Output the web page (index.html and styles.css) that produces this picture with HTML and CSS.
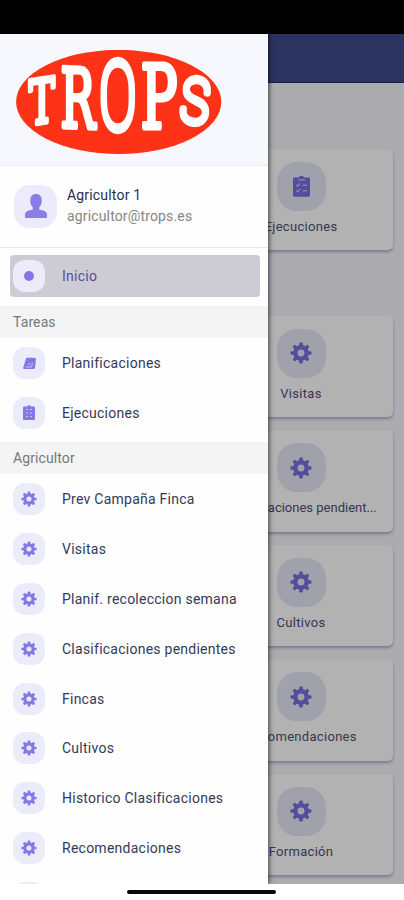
FILE: index.html
```
<!DOCTYPE html>
<html lang="es">
<head>
<meta charset="utf-8">
<title>TROPS</title>
<link rel="stylesheet" href="styles.css">
</head>
<body>
<svg class="defs" aria-hidden="true">
  <symbol id="gear" viewBox="0 0 24 24">
    <g fill="currentColor">
      <g id="teeth"><rect x="10" y="0.6" width="4" height="22.8" rx="1.3"/><rect x="0.6" y="10" width="22.8" height="4" rx="1.3"/></g>
      <use href="#teeth" transform="rotate(45 12 12)"/>
    </g>
    <circle cx="12" cy="12" r="6.1" fill="none" stroke="currentColor" stroke-width="5"/>
    <circle cx="12" cy="12" r="3.8" class="hole"/>
  </symbol>
  <symbol id="clip" viewBox="0 0 24 30">
    <path fill="currentColor" d="M1.5 3H7.5L9 1.8Q12-1 15 1.8L16.500 3H22.500Q24 3 24 4.500V28.500Q24 30 22.500 30H1.500Q0 30 0 28.500V4.500Q0 3 1.500 3Z"/>
    <path class="mark" d="M7 6.200H17M4.500 13.500L6.500 15.300L10 11.500M13.500 14H19.500M4.500 21.500L6.500 23.300L10 19.500M13.500 22H19.500"/>
  </symbol>
  <symbol id="list" viewBox="0 0 24 30">
    <path fill="currentColor" d="M1.500 3H7.500L12 0L16.500 3H22.500L24 4.500V28.500L22.500 30H1.500L0 28.500V4.500Z"/>
    <path class="mark" d="M6 9H10M14 9H18M6 16H10M14 16H18M6 23H10M14 23H18"/>
  </symbol>
  <symbol id="plan" viewBox="0 0 26 24">
    <path fill="currentColor" d="M6 3L8 1L10 2.500L12 0.500L14 2.500L16 0.500L18 2.500L21 1L26 3L24 22Q23.500 24 21 24H2Q0 24 0.500 21Z"/>
    <path class="mark" d="M5 20H17L19 12M10 15L15 13"/>
  </symbol>
  <symbol id="user" viewBox="0 0 22 24">
    <path fill="currentColor" d="M11 0C7.200 0 5.200 2.500 5.200 6.500C5.200 9.500 6.300 12 7.800 13.300V15.500L2.500 17Q0 18 0 21V23Q0 24 1.200 24H20.800Q22 24 22 23V21Q22 18 19.500 17L14.200 15.500V13.300C15.700 12 16.800 9.500 16.800 6.500C16.800 2.500 14.800 0 11 0Z"/>
  </symbol>
</svg>

<div class="phone">
  <div class="status"></div>
  <div class="screen">
    <main class="home">
      <header class="appbar"></header>
      <section class="grid first">
        <div class="card"></div>
        <div class="card"><span class="tile"><svg class="ic clip"><use href="#clip"/></svg></span><p>Ejecuciones</p></div>
      </section>
      <section class="grid">
        <div class="card"></div>
        <div class="card"><span class="tile"><svg class="ic"><use href="#gear"/></svg></span><p>Visitas</p></div>
        <div class="card"></div>
        <div class="card"><span class="tile"><svg class="ic"><use href="#gear"/></svg></span><p class="long">Clasificaciones pendient...</p></div>
        <div class="card"></div>
        <div class="card"><span class="tile"><svg class="ic"><use href="#gear"/></svg></span><p>Cultivos</p></div>
        <div class="card"></div>
        <div class="card"><span class="tile"><svg class="ic"><use href="#gear"/></svg></span><p>Recomendaciones</p></div>
        <div class="card"></div>
        <div class="card"><span class="tile"><svg class="ic"><use href="#gear"/></svg></span><p>Formación</p></div>
      </section>
    </main>
    <div class="scrim"></div>
    <aside class="drawer">
      <div class="brand">
        <svg class="logo" viewBox="16 50 206 104" role="img" aria-label="TROPS">
          <ellipse cx="118.700" cy="101.900" rx="102.600" ry="52"/>
          <g class="slab">
            <text transform="translate(29 122) skewY(-9) translate(0 3) scale(.385 .61)">T</text>
            <text transform="translate(60.500 127) skewY(2) scale(.46 .82)">R</text>
            <text class="round" transform="translate(99.500 129) scale(.55 .940)">O</text>
            <text transform="translate(140.500 128) scale(.55 .880)">P</text>
            <text class="round" transform="translate(179 121) rotate(6) scale(.475 .61)">S</text>
          </g>
        </svg>
      </div>
      <div class="profile">
        <span class="avatar"><svg><use href="#user"/></svg></span>
        <div><p class="name">Agricultor 1</p><p class="mail">agricultor@trops.es</p></div>
      </div>
      <nav>
        <a class="row active"><span class="chip"><i class="dot"></i></span><span>Inicio</span></a>
        <h2>Tareas</h2>
        <a class="row"><span class="chip"><svg class="plan"><use href="#plan"/></svg></span><span>Planificaciones</span></a>
        <a class="row"><span class="chip"><svg class="list"><use href="#list"/></svg></span><span>Ejecuciones</span></a>
        <h2 class="second">Agricultor</h2>
        <a class="row"><span class="chip"><svg><use href="#gear"/></svg></span><span>Prev Campaña Finca</span></a>
        <a class="row"><span class="chip"><svg><use href="#gear"/></svg></span><span>Visitas</span></a>
        <a class="row"><span class="chip"><svg><use href="#gear"/></svg></span><span>Planif. recoleccion semana</span></a>
        <a class="row"><span class="chip"><svg><use href="#gear"/></svg></span><span>Clasificaciones pendientes</span></a>
        <a class="row"><span class="chip"><svg><use href="#gear"/></svg></span><span>Fincas</span></a>
        <a class="row"><span class="chip"><svg><use href="#gear"/></svg></span><span>Cultivos</span></a>
        <a class="row"><span class="chip"><svg><use href="#gear"/></svg></span><span>Historico Clasificaciones</span></a>
        <a class="row"><span class="chip"><svg><use href="#gear"/></svg></span><span>Recomendaciones</span></a>
        <a class="row"><span class="chip"></span></a>
      </nav>
    </aside>
  </div>
  <footer class="gesture"><div class="bar"></div></footer>
</div>
</body>
</html>
```
FILE: styles.css
```
* { box-sizing: border-box; margin: 0; padding: 0; }
body { font-family: Roboto, "Liberation Sans", sans-serif; background: #fff; }
.defs { position: absolute; width: 0; height: 0; }
.phone { width: 404px; height: 900px; overflow: hidden; display: flex; flex-direction: column; }
.status { height: 34px; background: #000; flex: none; }
.screen { height: 850px; flex: none; position: relative; overflow: hidden; }
.hole { fill: #e9e8f8; }
.mark { fill: none; stroke: #e9e8f8; stroke-width: 1.8; opacity: .75; }

.home { height: 100%; background: #f5f5fc; overflow: hidden; }
.appbar { height: 49px; background: #3f4a8c; border-bottom: 1px solid #252d78; }
.grid { display: grid; grid-template-columns: 184px 184px; gap: 13px 14px; padding: 0 11px; margin-top: 65.500px; grid-auto-rows: 101.500px; }
.card { background: #fff; border-radius: 5px; box-shadow: 0 2px 3px rgba(70,75,130,.4); display: flex; flex-direction: column; align-items: center; padding: 13px 8px 0; }
.tile { width: 49px; height: 49px; border-radius: 20px; background: #e7e7f6; display: flex; align-items: center; justify-content: center; flex: none; }
.ic { width: 22px; height: 22px; color: #7a6ee0; }
.ic.clip { width: 17px; height: 22px; }
.card p { white-space: nowrap; font-size: 13px; line-height: 18px; letter-spacing: .3px; margin-top: 7px; color: #50507a; }
.card .long { letter-spacing: 0; }

.scrim { position: absolute; inset: 0; background: rgba(0,0,0,.3); }
.drawer { position: absolute; left: 0; top: 0; bottom: 0; width: 268px; background: #fefefe; box-shadow: 1px 0 5px rgba(0,0,0,.65); overflow: hidden; }
.brand { height: 132px; background: #f7f8fd; border-bottom: 1px solid #ebecf2; padding: 16px 0 0 16px; }
.logo { width: 206px; height: 104px; display: block; }
.logo ellipse { fill: #fe3216; }
.slab { font-family: "DejaVu Serif", serif; font-weight: 400; font-size: 100px; fill: #fff; stroke: #fff; stroke-width: 4px; stroke-linejoin: round; }
.slab text { vector-effect: non-scaling-stroke; }
.slab .round { font-family: Roboto, sans-serif; font-weight: 100; stroke-width: 7px; }
.profile { height: 82px; border-bottom: 1px solid #e7e7ec; display: flex; align-items: center; padding: 0 0 1px 14px; gap: 10px; }
.avatar { width: 43px; height: 43px; border-radius: 16px; background: #ecebfb; display: flex; align-items: center; justify-content: center; }
.avatar svg { width: 22px; height: 24px; color: #8a7de8; }
.name { font-size: 14px; font-weight: 450; line-height: 21px; color: #282f4c; letter-spacing: .18px; }
.mail { font-size: 14px; line-height: 21px; color: #858585; letter-spacing: .15px; }
.row { height: 49.800px; display: flex; align-items: center; padding-left: 13px; gap: 17px; font-size: 14px; font-weight: 450; letter-spacing: .25px; color: #333a58; }
.active { height: 42px; margin: 7px 8px 8.500px 10px; padding-left: 3px; border-radius: 4px; background: #cdcbd3; color: #5b4b9c; }
.chip { width: 32px; height: 32px; border-radius: 12px; background: #ecebfa; display: flex; align-items: center; justify-content: center; }
.chip svg { width: 16px; height: 16px; color: #8379e2; }
.chip .plan { width: 13px; height: 12px; }
.chip .list { width: 12px; height: 15px; }
.dot { width: 10px; height: 10px; border-radius: 50%; background: #8577e5; }
h2 { height: 32.500px; line-height: 32px; padding-left: 13px; background: #f4f4f4; color: #777; font-size: 14px; font-weight: 400; letter-spacing: .1px; }
.second { margin-top: 4.400px; }
.gesture { flex: 1; background: #fff; display: flex; justify-content: center; padding-top: 6px; }
.bar { width: 149px; height: 4px; border-radius: 2px; background: #080808; margin-right: 2px; }
```
